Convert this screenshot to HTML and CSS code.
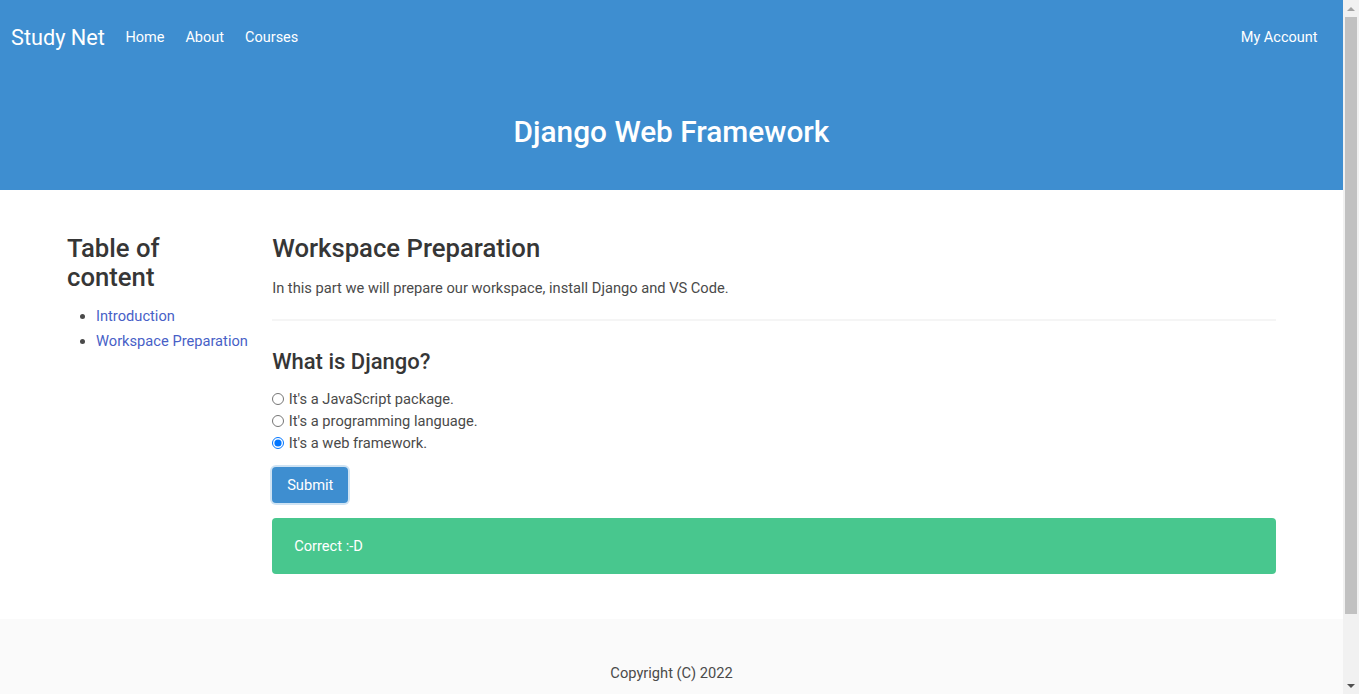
FILE: index.html
```html
<!DOCTYPE html>
<html lang="en">
<head>
<meta charset="utf-8">
<title>Study Net</title>
<link rel="stylesheet" href="styles.css">
</head>
<body>
<div class="page">
  <header class="hero">
    <nav class="navbar">
      <a class="brand" href="#">Study Net</a>
      <div class="nav-start">
        <a class="nav-item" href="#">Home</a>
        <a class="nav-item" href="#">About</a>
        <a class="nav-item" href="#">Courses</a>
      </div>
      <div class="nav-end">
        <a class="nav-item" href="#">My Account</a>
      </div>
    </nav>
    <div class="hero-body">
      <h1 class="hero-title">Django Web Framework</h1>
    </div>
  </header>

  <section class="section">
    <div class="columns">
      <aside class="column toc">
        <h2 class="toc-title">Table of content</h2>
        <ul class="toc-list">
          <li><a href="#">Introduction</a></li>
          <li><a href="#">Workspace Preparation</a></li>
        </ul>
      </aside>
      <main class="column main">
        <h2 class="page-title">Workspace Preparation</h2>
        <p class="intro">In this part we will prepare our workspace, install Django and VS Code.</p>
        <hr class="divider">
        <h3 class="quiz-title">What is Django?</h3>
        <form class="quiz">
          <label class="choice"><input type="radio" name="q"> It's a JavaScript package.</label>
          <label class="choice"><input type="radio" name="q"> It's a programming language.</label>
          <label class="choice"><input type="radio" name="q" checked> It's a web framework.</label>
          <button type="button" class="button">Submit</button>
        </form>
        <div class="notification">Correct :-D</div>
      </main>
    </div>
  </section>

  <footer class="footer">
    <p>Copyright (C) 2022</p>
  </footer>
</div>
<div class="scrollbar" aria-hidden="true">
  <div class="sb-btn"><span class="arrow-up"></span></div>
  <div class="sb-track">
    <div class="sb-thumb"></div>
  </div>
  <div class="sb-btn"><span class="arrow-down"></span></div>
</div>
</body>
</html>
```

FILE: styles.css
```css
html, body {
  height: 100%;
}
body {
  margin: 0;
  display: flex;
  overflow: hidden;
  font-family: Roboto, "Open Sans", sans-serif;
  font-size: 14.67px;
  line-height: 1.5;
  color: #4a4a4a;
  background: #fff;
}
a {
  text-decoration: none;
}
.page {
  flex: 1;
  min-width: 0;
  height: 100%;
  overflow: hidden;
}

/* fake scrollbar */
.scrollbar {
  flex: 0 0 16px;
  background: #f1f1f1;
  display: flex;
  flex-direction: column;
}
.sb-btn {
  height: 17px;
  display: flex;
  align-items: center;
  justify-content: center;
}
.arrow-up {
  width: 0;
  height: 0;
  border-left: 4px solid transparent;
  border-right: 4px solid transparent;
  border-bottom: 4px solid #a3a3a3;
}
.arrow-down {
  width: 0;
  height: 0;
  border-left: 4px solid transparent;
  border-right: 4px solid transparent;
  border-top: 4px solid #505050;
}
.sb-track {
  flex: 1;
  padding: 0 2px;
}
.sb-thumb {
  height: 597px;
  background: #c1c1c1;
}

/* hero */
.hero {
  background: #3e8ed0;
  color: #fff;
  height: 190px;
  display: flex;
  flex-direction: column;
}
.navbar {
  display: flex;
  align-items: center;
  height: 70px;
  padding-top: 3px;
}
.brand {
  color: #fff;
  font-size: 21.7px;
  padding: 0 10px 0 11px;
}
.nav-start {
  display: flex;
}
.nav-end {
  margin-left: auto;
  display: flex;
  padding-right: 15px;
}
.nav-item {
  color: #fff;
  padding: 0 10.5px;
  font-size: 14.5px;
}
.hero-body {
  flex: 1;
  display: flex;
  align-items: center;
  justify-content: center;
  padding-top: 1px;
}
.hero-title {
  margin: 0;
  font-size: 29.8px;
  font-weight: 500;
  line-height: 1.125;
}

/* section */
.section {
  padding: 33px 56px 34px;
}
.columns {
  display: flex;
}
.column {
  padding: 11px;
}
.toc {
  flex: 0 0 16.6667%;
  box-sizing: border-box;
}
.main {
  flex: 1;
}
.toc-title,
.page-title {
  margin: 0;
  font-size: 25.7px;
  font-weight: 500;
  line-height: 1.125;
  color: #363636;
}
.toc-list {
  margin: 13px 0 0;
  padding-left: 29px;
}
.toc-list li + li {
  margin-top: 3px;
}
.toc-list a {
  color: #485fc7;
}
.intro {
  margin: 14px 0 0;
}
.divider {
  border: 0;
  height: 2px;
  background: #f5f5f5;
  margin: 20px 0 29px;
}
.quiz-title {
  margin: 0 0 13px;
  font-size: 22px;
  font-weight: 500;
  line-height: 1.125;
  color: #363636;
}
.quiz {
  display: flex;
  flex-direction: column;
  align-items: flex-start;
}
.choice {
  display: block;
  line-height: 22px;
}
.choice input {
  margin: 0 1px 0 0;
  width: 12px;
  height: 12px;
  vertical-align: -1px;
}
.button {
  margin-top: 13px;
  background: #3e8ed0;
  color: #fff;
  border: 1px solid transparent;
  border-radius: 4px;
  height: 36px;
  padding: 0 14px;
  font-family: inherit;
  font-size: 14.67px;
  box-shadow: 0 0 0 2px rgba(62, 142, 208, 0.25);
}
.notification {
  margin-top: 15px;
  background: #48c78e;
  color: #fff;
  border-radius: 4px;
  padding: 17px 22px;
}

/* footer */
.footer {
  background: #fafafa;
  padding: 43px 22px 88px;
  text-align: center;
}
.footer p {
  margin: 0;
}
```
